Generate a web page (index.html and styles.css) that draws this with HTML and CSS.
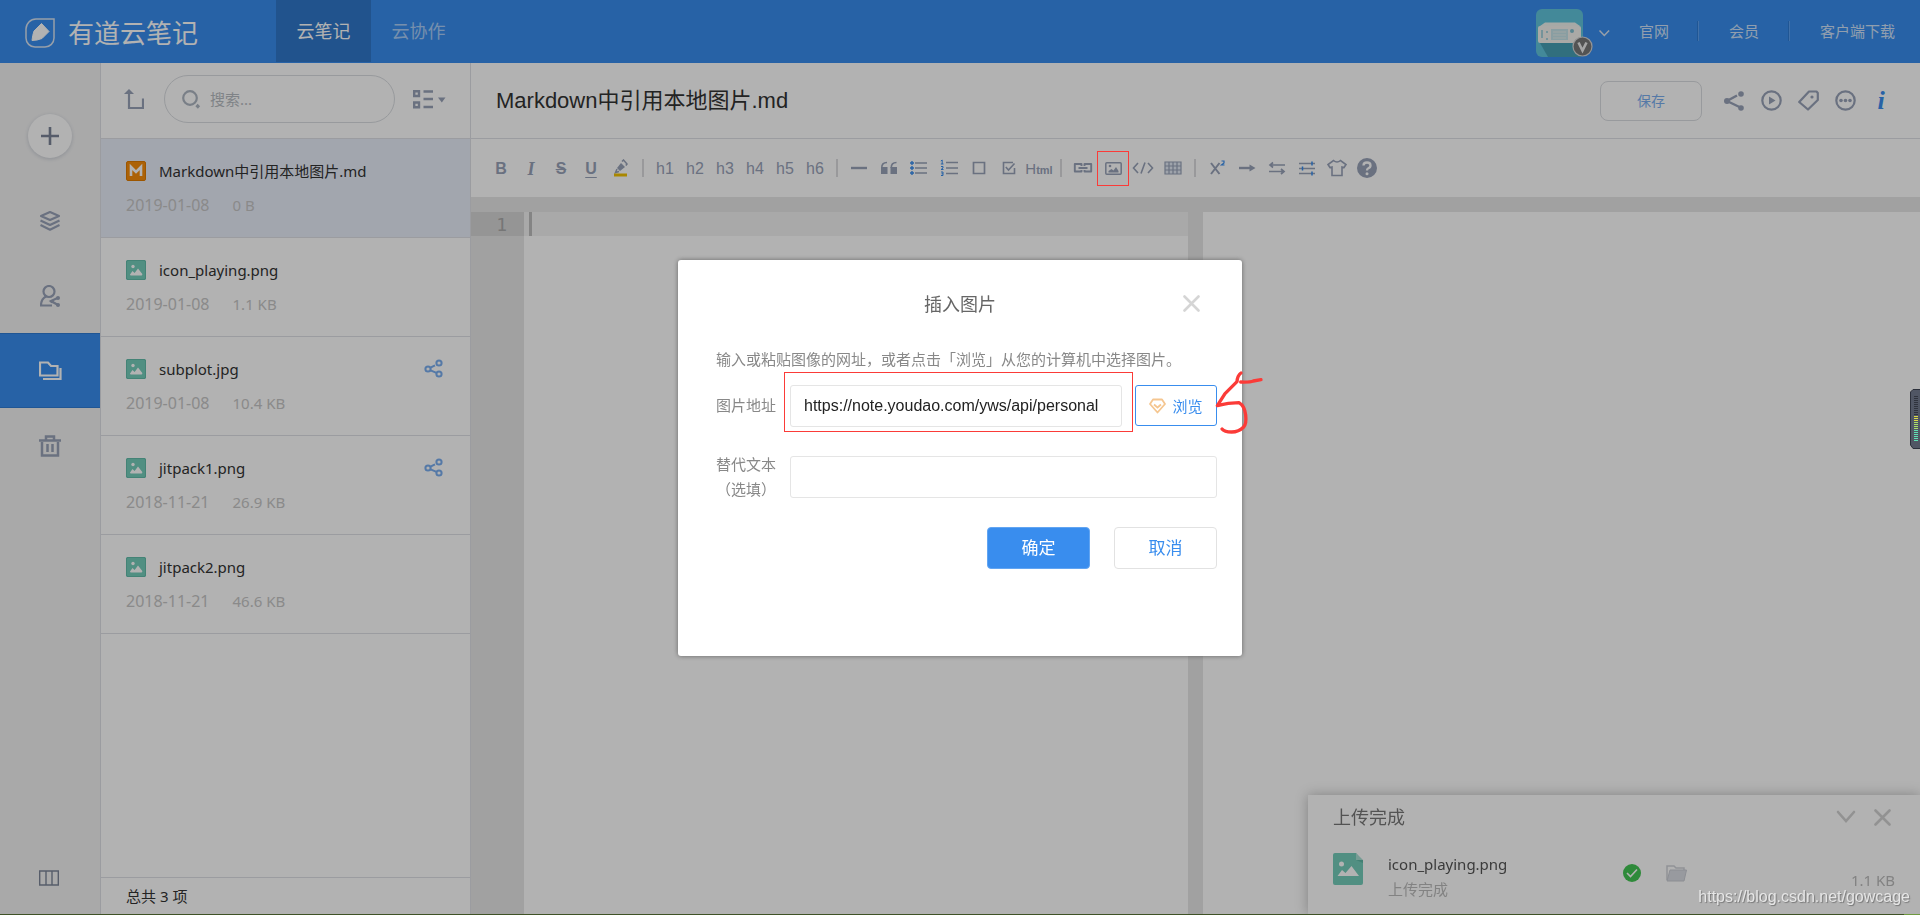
FILE: index.html
```html
<!DOCTYPE html>
<html lang="zh-CN">
<head>
<meta charset="utf-8">
<title>有道云笔记</title>
<link rel="stylesheet" href="styles.css">
</head>
<body>
<svg class="defs" aria-hidden="true">
  <symbol id="pic" viewBox="0 0 20 20">
    <rect width="20" height="20" rx="2" fill="#5fb8a6"/><rect x=".5" y=".5" width="19" height="19" rx="1.5" fill="#74cdbb" stroke="#62bcaa"/>
    <circle cx="7" cy="6.5" r="1.7" fill="#fff"/><path d="M4 14.5 6.5 11 8.6 13 12 8.5l4.300 5.500v.5q0 1-1 1H5q-1 0-1-1z" fill="#fff"/>
  </symbol>
  <symbol id="share" viewBox="0 0 20 20">
    <g fill="none" stroke="#7aaef0" stroke-width="2"><circle cx="4" cy="10" r="2.600"/><circle cx="15" cy="4" r="2.600"/><circle cx="15" cy="15" r="2.600"/><path d="m6.500 8.700 4.500-2.400M6.500 11.300l6 2.600"/></g>
  </symbol>
</svg>

<div class="app">
  <header class="topbar">
    <a class="brand" href="#">
      <svg width="30" height="30" viewBox="0 0 30 30"><path d="M11 1H29V20a9 9 0 0 1-9 9H10a9 9 0 0 1-9-9V11A10 10 0 0 1 11 1Z" fill="none" stroke="#d8e4f2" stroke-width="1.500"/><path d="M16.500 5.500 24 13.500 17 20.500Q12 22.500 7 22.500 7.500 17 9 13Z" fill="#fff" stroke="#fff" stroke-linejoin="round"/></svg>
      <span>有道云笔记</span>
    </a>
    <nav class="tabs"><a class="tab active" href="#">云笔记</a><a class="tab" href="#">云协作</a></nav>
    <div class="account">
      <button class="avatar" aria-label="账户">
        <svg width="76" height="49" viewBox="0 0 76 49">
          <rect width="47" height="48" rx="6" fill="#60c4dc"/><path d="M4 34H45V48H12Z" fill="#47a0b5"/><path d="M9 13.500H39L44 17H4Z" fill="#eef3ee"/><rect x="2" y="17" width="43" height="17" rx="2" fill="#f4f3ee"/>
          <path d="M6 21v8M11 22v2M11 29v2" stroke="#8fc9d8" stroke-width="1.500"/><rect x="15" y="20" width="17" height="11" fill="#c5e2e8"/><path d="M17 23h13M17 26h13M17 29h13" stroke="#e6efec"/><circle cx="36" cy="22" r="2" fill="#80bfd0"/>
          <circle cx="46.500" cy="37.500" r="9.500" fill="#777" stroke="#d5d5d5" stroke-width="1.200"/><path d="m42.500 33.500 4 8 4-8" fill="none" stroke="#ececec" stroke-width="2.600"/>
          <path d="m63.500 21.500 4.800 5 4.800-5" fill="none" stroke="#d8e4f2" stroke-width="1.500"/>
        </svg>
      </button>
      <a class="top-link" href="#">官网</a><a class="top-link" href="#">会员</a><a class="top-link" href="#">客户端下载</a>
    </div>
  </header>

  <div class="workspace">
    <aside class="rail">
      <button class="add" aria-label="新建"><svg width="18" height="18" viewBox="0 0 18 18"><path d="M9 0V18M0 9H18" stroke="#7b8598" stroke-width="2.600"/></svg></button>
      <nav class="rail-nav">
        <a href="#" aria-label="最新"><svg width="20" height="20" viewBox="0 0 20 20"><g fill="none" stroke="#98a2b8" stroke-width="2.200" stroke-linejoin="round"><path d="M1 5 10 1 19 5 10 9Z"/><path d="m.5 9.500 9.500 4.500 9.500-4.500M.5 14l9.500 4.700L19.500 14"/></g></svg></a>
        <a href="#" aria-label="与我分享"><svg width="20" height="22" viewBox="0 0 20 22"><g fill="none" stroke="#98a2b8" stroke-width="2.200"><circle cx="9" cy="6.500" r="5.500"/><path d="M6 11.500Q1 14 1 20.500H12M17.500 13 11 16l7 4"/></g><circle cx="18" cy="13" r="2" fill="#98a2b8"/><circle cx="18" cy="20" r="2" fill="#98a2b8"/><circle cx="12" cy="16.500" r="1.800" fill="#98a2b8"/></svg></a>
        <a class="active" href="#" aria-label="我的文件夹"><svg width="23" height="20" viewBox="0 0 23 20"><path d="M1 1.500H9L12 5H18.500V14.500H1ZM21.500 7V18H4" fill="none" stroke="#fff" stroke-width="2.200"/></svg></a>
        <a href="#" aria-label="回收站"><svg width="22" height="22" viewBox="0 0 22 22"><path d="M0 5.500H22M7 5V1.500H15V5M3 7V20.500H19V7M8.500 9v8M13.500 9v8" fill="none" stroke="#98a2b8" stroke-width="2.500"/></svg></a>
      </nav>
      <button class="layout-toggle" aria-label="切换布局"><svg width="20" height="16" viewBox="0 0 20 16"><path d="M.7 1H19.300V15H.7ZM7 1V15M13 1V15" fill="none" stroke="#7d8699" stroke-width="1.400"/></svg></button>
    </aside>

    <section class="files">
      <div class="files-head">
        <button class="icon-btn" aria-label="上一级"><svg width="20" height="20" viewBox="0 0 20 20"><path d="M5 3V19H19V9.500" fill="none" stroke="#98a2b8" stroke-width="2.200"/><path d="M0 5 5 0 10 5Z" fill="#98a2b8"/></svg></button>
        <label class="search">
          <svg width="19" height="19" viewBox="0 0 19 19"><circle cx="8" cy="8" r="6.800" fill="none" stroke="#aeb6c2" stroke-width="2.200"/><path d="m14.500 15 2.500 2.500" stroke="#aeb6c2" stroke-width="3.200"/></svg>
          <input type="search" placeholder="搜索..." aria-label="搜索">
        </label>
        <button class="icon-btn" aria-label="视图"><svg width="33" height="19" viewBox="0 0 33 19"><path d="M1.200 1.200H6V6H1.200ZM1.200 12.500H6V17.300H1.200ZM10.500 1.500H20M10.500 9H20M10.500 17H20" fill="none" stroke="#98a2b8" stroke-width="2.400"/><path d="M25 7.500h7.500L28.800 12.500Z" fill="#98a2b8"/></svg></button>
      </div>
      <ul class="file-list">
        <li class="file selected">
          <div class="file-name"><svg width="20" height="20" viewBox="0 0 20 20"><rect x=".5" y=".5" width="19" height="19" rx="1.500" fill="#f68d0b" stroke="#e07c00"/><path d="M5 15V6L10 11 15 6V15" fill="none" stroke="#fff" stroke-width="2.600"/></svg><span>Markdown中引用本地图片.md</span></div>
          <div class="file-meta"><time>2019-01-08</time><span>0 B</span></div>
        </li>
        <li class="file">
          <div class="file-name"><svg width="20" height="20"><use href="#pic"/></svg><span>icon_playing.png</span></div>
          <div class="file-meta"><time>2019-01-08</time><span>1.1 KB</span></div>
        </li>
        <li class="file">
          <div class="file-name"><svg width="20" height="20"><use href="#pic"/></svg><span>subplot.jpg</span><svg class="shared" width="20" height="20"><use href="#share"/></svg></div>
          <div class="file-meta"><time>2019-01-08</time><span>10.4 KB</span></div>
        </li>
        <li class="file">
          <div class="file-name"><svg width="20" height="20"><use href="#pic"/></svg><span>jitpack1.png</span><svg class="shared" width="20" height="20"><use href="#share"/></svg></div>
          <div class="file-meta"><time>2018-11-21</time><span>26.9 KB</span></div>
        </li>
        <li class="file">
          <div class="file-name"><svg width="20" height="20"><use href="#pic"/></svg><span>jitpack2.png</span></div>
          <div class="file-meta"><time>2018-11-21</time><span>46.6 KB</span></div>
        </li>
      </ul>
      <footer class="files-foot">总共 3 项</footer>
    </section>

    <main class="note">
      <div class="note-head">
        <h1>Markdown中引用本地图片.md</h1>
        <button class="save">保存</button>
        <div class="note-actions">
          <button aria-label="分享"><svg width="21" height="20" viewBox="0 0 21 20"><g fill="#98a2b8"><circle cx="3" cy="10" r="3"/><circle cx="17" cy="3" r="2.800"/><circle cx="17" cy="17" r="2.800"/></g><path d="M13 4.500 3 10l13.500 6.500" fill="none" stroke="#98a2b8" stroke-width="2.400"/></svg></button>
          <button aria-label="播放"><svg width="21" height="21" viewBox="0 0 21 21"><circle cx="10.500" cy="10.500" r="9.200" fill="none" stroke="#98a2b8" stroke-width="2.200"/><path d="M8 6.500 14.500 10.500 8 14.500Z" fill="#98a2b8"/></svg></button>
          <button aria-label="标签"><svg width="21" height="21" viewBox="0 0 21 21"><path d="M11 1.500H18.500L19.800 3V10L10 19.500 1.200 12Z" fill="none" stroke="#98a2b8" stroke-width="2.200" stroke-linejoin="round"/><circle cx="14" cy="7" r="1.600" fill="#98a2b8"/></svg></button>
          <button aria-label="更多"><svg width="21" height="21" viewBox="0 0 21 21"><circle cx="10.500" cy="10.500" r="9.200" fill="none" stroke="#98a2b8" stroke-width="2.200"/><g fill="#98a2b8"><circle cx="6" cy="10.500" r="1.800"/><circle cx="10.500" cy="10.500" r="1.800"/><circle cx="15" cy="10.500" r="1.800"/></g></svg></button>
          <button class="info" aria-label="信息">i</button>
        </div>
      </div>

      <div class="toolbar">
        <button class="glyph bold">B</button>
        <button class="glyph ital">I</button>
        <button class="glyph strike">S</button>
        <button class="glyph under">U</button>
        <button aria-label="高亮"><svg width="14" height="18" viewBox="0 0 14 18"><path d="M3 9 7 4 11 8 6 12Z" fill="#98a2b8"/><path d="M8 2.500 9.500 1 13 5 11.800 6.500M3 10 1.500 13.500 5 12.500" fill="none" stroke="#98a2b8" stroke-width="1.500"/><path d="M0 16H13" stroke="#f2c200" stroke-width="3"/></svg></button>
        <i class="sep"></i>
        <button class="glyph">h1</button><button class="glyph">h2</button><button class="glyph">h3</button><button class="glyph">h4</button><button class="glyph">h5</button><button class="glyph">h6</button>
        <i class="sep"></i>
        <button aria-label="分隔线"><svg width="18" height="18" viewBox="0 0 18 18"><path d="M1 9H17" stroke="#98a2b8" stroke-width="2.400"/></svg></button>
        <button aria-label="引用"><svg width="18" height="14" viewBox="0 0 18 14"><path d="M1 6H7.500V13H1ZM10.500 6H17V13H10.500Z" fill="#98a2b8"/><path d="M1.800 7Q1.500 1.500 7 1.500M11.300 7Q11 1.500 16.500 1.500" fill="none" stroke="#98a2b8" stroke-width="1.600"/></svg></button>
        <button aria-label="无序列表"><svg width="18" height="16" viewBox="0 0 18 16"><path d="M5 3H17M5 8H17M5 13H17" stroke="#98a2b8" stroke-width="1.400"/><path d="M0 3H4M2 1V5M0 8H4M2 6v4M0 13H4M2 11v4" stroke="#398dee" stroke-width="1.400"/></svg></button>
        <button aria-label="有序列表"><svg width="18" height="18" viewBox="0 0 18 18"><path d="M6 3.500H18M6 9H18M6 14.500H18" stroke="#98a2b8" stroke-width="1.500"/><path d="M.8 2 2.200 1V5M.8 5H3.500M1 7.500H3V9L1 10.500H3.500M1 13H3V16.500H1M1.500 14.800H3" fill="none" stroke="#398dee"/></svg></button>
        <button aria-label="方框"><svg width="14" height="14" viewBox="0 0 14 14"><path d="M1.500 1.500h11v11h-11z" fill="none" stroke="#98a2b8" stroke-width="1.700"/></svg></button>
        <button aria-label="任务"><svg width="14" height="14" viewBox="0 0 14 14"><path d="M12.500 7v5.500h-11v-11H11M3.800 6 6.500 9 12.500 2.500" fill="none" stroke="#98a2b8" stroke-width="1.600"/></svg></button>
        <button class="glyph html"><b>H</b>tml</button>
        <i class="sep"></i>
        <button aria-label="链接"><svg width="20" height="12" viewBox="0 0 20 12"><path d="M8.500 4V2H1.800V9.500H8.500V8M11.500 4V2H18.200V9.500H11.500V8M5.500 6H14.500" fill="none" stroke="#98a2b8" stroke-width="1.900" stroke-linejoin="round"/></svg></button>
        <button class="marked" aria-label="图片"><svg width="17" height="13" viewBox="0 0 17 13"><rect x=".8" y=".8" width="15.400" height="11.400" rx="1" fill="none" stroke="#98a2b8" stroke-width="1.500"/><path d="M3.500 10.500V9L6.500 7 8.500 8.500 11 5 13.500 9V10.500Z" fill="#98a2b8"/><circle cx="5" cy="4" r="1.300" fill="#98a2b8"/></svg></button>
        <button aria-label="代码"><svg width="22" height="14" viewBox="0 0 22 14"><path d="M6 2 1.500 7 6 12M16 2 20.500 7 16 12M13 1.500 9 12.500" fill="none" stroke="#98a2b8" stroke-width="1.600"/></svg></button>
        <button aria-label="表格"><svg width="18" height="14" viewBox="0 0 18 14"><path d="M1 1H17V13H1ZM1 5H17M1 9H17M5 1V13M9 1V13M13 1V13" fill="#e2eaf5" stroke="#98a2b8" stroke-width="1.200"/></svg></button>
        <i class="sep"></i>
        <button aria-label="上标"><svg width="18" height="18" viewBox="0 0 18 18"><path d="m3 4 8.500 11M11.500 4 3 15" stroke="#98a2b8" stroke-width="2"/><path d="M13.500 2H16V4L13.500 6H16.500" fill="none" stroke="#398dee" stroke-width="1.200"/></svg></button>
        <button aria-label="箭头"><svg width="18" height="10" viewBox="0 0 18 10"><path d="M1 5H13" stroke="#98a2b8" stroke-width="2.400"/><path d="M11.500 1.500 17.500 5 11.500 8.500Z" fill="#98a2b8"/></svg></button>
        <button aria-label="同步"><svg width="18" height="14" viewBox="0 0 18 14"><path d="M17 4H2M5 1.500 2 4 5 6.500M1 10.500H16M13 8 16 10.500 13 13" fill="none" stroke="#98a2b8" stroke-width="1.700"/></svg></button>
        <button aria-label="设置"><svg width="18" height="15" viewBox="0 0 18 15"><path d="M1 2.500H17M1 7.500H17M1 12.500H17" stroke="#98a2b8" stroke-width="1.600"/><path d="M14 .5v4M4.500 5.500v4M14 10.500v4" stroke="#398dee" stroke-width="1.500"/></svg></button>
        <button aria-label="主题"><svg width="20" height="18" viewBox="0 0 20 18"><path d="M6.500 1.500Q10 4.500 13.500 1.500L19 5.500 17 8.500 15 8V16.500H5V8L3 8.500 1 5.500Z" fill="none" stroke="#98a2b8" stroke-width="1.600"/></svg></button>
        <button aria-label="帮助"><svg width="20" height="20" viewBox="0 0 20 20"><circle cx="10" cy="10" r="10" fill="#98a2b8"/><path d="M6.500 7.500Q6.500 4.500 10 4.500T13.500 7.500Q13.500 9.500 11 10.500 10 11 10 12.500" fill="none" stroke="#fff" stroke-width="2.300"/><circle cx="10" cy="15.800" r="1.500" fill="#fff"/></svg></button>
      </div>

      <div class="panes">
        <div class="editor">
          <div class="gutter"><span>1</span></div>
          <div class="code"><div class="line"><i class="caret"></i></div><textarea aria-label="Markdown 编辑区"></textarea></div>
        </div>
        <div class="preview"></div>
      </div>
    </main>
  </div>
</div>

<section class="uploads">
  <div class="uploads-head"><h2>上传完成</h2>
    <button aria-label="收起"><svg width="20" height="16" viewBox="0 0 20 16"><path d="M2 3 10 12 18 3" fill="none" stroke="#d2d2d2" stroke-width="2.600" stroke-linecap="round"/></svg></button>
    <button aria-label="关闭"><svg width="17" height="17" viewBox="0 0 17 17"><path d="M1.500 1.500 15.500 15.500M15.500 1.500 1.500 15.500" stroke="#d2d2d2" stroke-width="2.600" stroke-linecap="round"/></svg></button>
  </div>
  <div class="upload">
    <svg class="upload-icon" width="30" height="32" viewBox="0 0 30 32"><path d="M2 0H23L30 9V30Q30 32 28 32H2Q0 32 0 30V2Q0 0 2 0Z" fill="#74cdbb"/><path d="M23 0 30 7H23Z" fill="#a9e0d5"/><path d="M23 7H30V10Z" fill="#5fb8a6"/><circle cx="8.500" cy="11" r="2.500" fill="#fff"/><path d="M4.500 23 9 17 12.500 20 18.500 13 26 23Z" fill="#fff"/></svg>
    <div class="upload-text"><strong>icon_playing.png</strong><span>上传完成</span></div>
    <svg class="upload-done" width="18" height="18" viewBox="0 0 18 18"><circle cx="9" cy="9" r="9" fill="#43c653"/><path d="m4 9 3.500 3.500L14 5.500" fill="none" stroke="#fff" stroke-width="1.600"/></svg>
    <svg class="upload-folder" width="21" height="17" viewBox="0 0 21 17"><path d="M1 15V1H8L10 3H18V6" fill="none" stroke="#cfd2d8" stroke-width="1.500"/><path d="M4 5H20.500L18 16H1Z" fill="#dadde4" stroke="#c9ccd4"/></svg>
    <span class="upload-size">1.1 KB</span>
  </div>
</section>

<div class="mask">
  <form class="dialog" role="dialog" aria-labelledby="dlg-title">
    <div class="dialog-head"><h2 id="dlg-title">插入图片</h2>
      <button type="button" class="close" aria-label="关闭"><svg width="17" height="17" viewBox="0 0 17 17"><path d="M1.500 1.500 15.500 15.500M15.500 1.500 1.500 15.500" stroke="#d5d5d5" stroke-width="2.600" stroke-linecap="round"/></svg></button></div>
    <p>输入或粘贴图像的网址，或者点击「浏览」从您的计算机中选择图片。</p>
    <div class="field first">
      <label for="url">图片地址</label>
      <div class="boxed"><input id="url" type="text" value="https://note.youdao.com/yws/api/personal"></div>
      <button type="button" class="browse"><svg width="17" height="16" viewBox="0 0 17 16"><path d="M4 1.500H13L16 6 8.500 14.500 1 6Z" fill="none" stroke="#f5c690" stroke-width="1.800" stroke-linejoin="round"/><path d="m5 6.500 3.500 3 3.500-3" fill="none" stroke="#f5c690" stroke-width="1.800"/></svg>浏览</button>
    </div>
    <div class="field">
      <label for="alt">替代文本<br>（选填）</label>
      <input id="alt" type="text">
    </div>
    <div class="buttons"><button type="submit" class="ok">确定</button><button type="button" class="cancel">取消</button></div>
    <svg class="step" width="48" height="65" viewBox="735 360 144 195" aria-label="5"><g fill="none" stroke="#fb3b38" stroke-width="10" stroke-linecap="round" stroke-linejoin="round"><path d="M813 369Q802 377 801 395L765 431 742 467Q760 462 775 460L807 458Q824 468 827 495 830 522 821 531 806 546 785 546 763 546 756 537"/><path d="M812 396Q840 397 850 393L873 389"/></g></svg>
  </form>
</div>

<div class="meter"><svg width="10" height="60" viewBox="0 0 10 60"><path d="M10 .5H3L.5 3V56L3 59.500H10" fill="#505664" stroke="#2c303b"/><path d="M6 7V27" stroke="#2f333d" stroke-width="4" stroke-dasharray="1 1"/><path d="M6 27V33" stroke="#dcdc45" stroke-width="4" stroke-dasharray="1 1"/><path d="M6 33V41" stroke="#a8e06a" stroke-width="4" stroke-dasharray="1 1"/><path d="M6 41V53" stroke="#5fe0b4" stroke-width="4" stroke-dasharray="1 1"/></svg></div>
<div class="watermark">https://blog.csdn.net/gowcage</div>
<div class="edge"></div>
</body>
</html>
```

FILE: styles.css
```css
* { box-sizing: border-box; }
body { margin: 0; height: 100vh; overflow: hidden; background: #fff; color: #333; font: 15px/20px "Noto Sans", "Noto Sans CJK SC", sans-serif; }
button { padding: 0; border: 0; background: none; font: inherit; color: inherit; cursor: pointer; }
input, textarea { font: inherit; outline: none; }
h1, h2, p, ul { margin: 0; padding: 0; font-weight: 400; list-style: none; }
a { color: inherit; text-decoration: none; }
svg { display: block; flex: none; }
.defs { position: absolute; width: 0; height: 0; }

.app { display: flex; flex-direction: column; height: 100vh; }
.topbar { display: flex; flex: none; height: 63px; background: #398dee; color: #fff; }
.brand { display: flex; align-items: center; gap: 13px; width: 276px; padding: 2px 0 0 25px; font-size: 26px; line-height: 36px; }
.tabs { display: flex; height: 62px; }
.tab { width: 95px; font-size: 18px; line-height: 62px; text-align: center; color: #a9cdf8; }
.tab.active { background: #3078ca; color: #fff; }
.account { display: flex; align-items: center; margin-left: auto; }
.avatar { width: 76px; margin-top: 4px; }
.top-link { margin-bottom: 2px; padding: 0 30px; line-height: 20px; color: #d0e3fa; }
.top-link + .top-link { border-left: 1px solid #5da3f2; box-shadow: -1px 0 #2f7bd4; }
.top-link:last-child { padding-right: 25px; }
.avatar + .top-link { padding: 0 29px 0 27px; }

.workspace { display: flex; flex: 1; min-height: 0; }
.rail { display: flex; flex: none; flex-direction: column; align-items: center; width: 101px; padding: 51px 0 29px; border-right: 1px solid #dfe0e6; background: #f3f3f3; }
.add { display: grid; place-items: center; width: 44px; height: 44px; border-radius: 50%; background: #fff; box-shadow: 0 1px 4px #c8ccd4; }
.rail-nav { width: 100%; margin-top: 25px; }
.rail-nav a { display: grid; place-items: center; height: 75px; }
.rail-nav .active { background: #398dee; border: solid #2f7bd4; border-width: 1px 0; }
.layout-toggle { margin: auto 2px 0 0; }

.files { display: flex; flex: none; flex-direction: column; width: 370px; border-right: 1px solid #dfe0e6; }
.files-head { display: flex; align-items: center; height: 76px; padding: 0 24px 3px 23px; gap: 18px; border-bottom: 1px solid #dfe0e6; }
.files-head .search { display: flex; align-items: center; flex: 1; gap: 9px; min-width: 0; height: 48px; padding-left: 17px; border: 1px solid #dadde1; border-radius: 24px; margin-left: 2px; }
.search input { flex: 1; min-width: 0; padding: 0; border: 0; background: none; }
.search input::placeholder { color: #b7bcc2; }
.file-list { flex: 1; }
.file { height: 99px; padding: 21px 26px 0 25px; border-bottom: 1px solid #dfe0e6; }
.selected { background: #e9eefa; }
.file-name { display: flex; align-items: center; gap: 13px; height: 22px; }
.shared { margin-left: auto; }
.file-meta { display: flex; gap: 23px; margin-top: 12px; line-height: 22px; color: #c6c6c6; }
.file-meta time { font-size: 16px; }
.files-foot { height: 38px; padding-left: 25px; border-top: 1px solid #dfe0e6; line-height: 37px; }

.note { display: flex; flex: 1; flex-direction: column; min-width: 0; }
.note-head { display: flex; flex: none; align-items: center; height: 76px; padding: 0 22px 0 25px; border-bottom: 1px solid #dfe0e6; }
.note-head h1 { flex: 1; font: 22px/30px "Liberation Sans", "Noto Sans CJK SC", sans-serif; }
.save { width: 102px; height: 40px; border: 1px solid #dadde1; border-radius: 8px; color: #7aaef0; font-size: 14px; }
.note-actions { display: flex; margin-left: 14px; }
.note-actions button { display: grid; place-items: center; width: 37px; height: 40px; }
.note-actions .info { width: 34px; font: italic bold 26px/40px "Liberation Serif", serif; color: #398dee; }

.toolbar { display: flex; flex: none; align-items: center; height: 58px; padding-left: 15px; color: #98a2b8; }
.toolbar button { display: grid; place-items: center; flex: none; width: 30px; height: 35px; }
.toolbar .glyph { padding-top: 1px; font: 16px/20px "Liberation Sans", Arial, sans-serif; }
.toolbar .bold { font-weight: 700; }
.toolbar .ital { font: italic bold 18px/20px "Liberation Serif", serif; }
.toolbar .strike { font-weight: 700; text-decoration: line-through; }
.toolbar .under { font-weight: 700; text-decoration: underline; text-underline-offset: 3px; }
.toolbar .html { display: flex; align-items: baseline; justify-content: center; font-size: 11px; font-weight: 700; line-height: 34px; }
.html b { font-size: 15px; font-weight: 400; }
.sep { flex: none; width: 2px; height: 18px; margin: 0 6px; background: #dcdcdf; }
.marked { position: relative; }
.marked::after { content: ""; position: absolute; z-index: 5; inset: 0 -1px; border: 1px solid #fb3b38; }

.panes { display: grid; grid-template-columns: 1fr 1fr; gap: 15px; flex: 1; padding-top: 15px; background: #e7e7e7; }
.editor { display: flex; background: #fff; }
.gutter { width: 53px; background: #e7e7e7; }
.gutter span { display: block; height: 24px; padding-right: 17px; background: #d6d6d6; color: #aaa; font: 18px/26px "DejaVu Sans Mono", monospace; text-align: right; }
.code { display: flex; flex: 1; flex-direction: column; }
.line { height: 24px; padding-left: 5px; background: #f3f3f3; }
.caret { display: block; width: 3px; height: 24px; background: #bdbdbd; }
.code textarea { flex: 1; border: 0; resize: none; }
.preview { background: #fff; }

.uploads { position: fixed; right: 0; bottom: 1px; width: 612px; height: 119px; padding: 0 25px; background: #fff; box-shadow: 0 0 12px #bbb; }
.uploads-head { display: flex; align-items: center; gap: 18px; height: 44px; padding-right: 4px; }
.uploads-head h2 { flex: 1; font-size: 18px; line-height: 26px; color: #777; }
.upload { display: flex; padding-top: 13px; }
.upload-icon { margin-top: 1px; }
.upload-text { width: 235px; margin-left: 25px; }
.upload-text strong, .upload-text span { display: block; font-weight: 400; line-height: 25px; color: #555; }
.upload-text span { color: #bbb; }
.upload-done { margin-top: 12px; }
.upload-folder { margin: 13px 0 0 25px; }
.upload-size { margin: 18px 0 0 auto; color: #bbb; }

.mask { position: fixed; inset: 0; display: grid; place-items: center; background: rgba(0, 0, 0, .3); }
.dialog { position: relative; width: 564px; min-height: 396px; padding: 28px 25px 40px 38px; border-radius: 3px; background: #fff; box-shadow: 0 0 5px #666; color: #888; }
.dialog-head { display: flex; align-items: center; height: 32px; padding-left: 21px; }
.dialog-head h2 { flex: 1; text-align: center; font-size: 18px; line-height: 28px; color: #666; }
.close { margin-right: 17px; }
.dialog p { margin: 28px 0 2px; line-height: 22px; white-space: nowrap; }
.field { display: flex; align-items: center; margin-top: 20px; }
.field label { flex: none; width: 74px; line-height: 25px; }
.field.first { margin-top: 0; }
.field.first label { width: 68px; }
.field input { flex: 1; min-width: 0; width: 100%; height: 42px; padding: 0 13px; border: 1px solid #e5e5e5; border-radius: 3px; color: #222; font: 16px/22px "Liberation Sans", Arial, sans-serif; }
.boxed { flex: 1; padding: 12px 10px 4px 5px; border: 1px solid #fb3b38; }
.first label, .browse { margin-top: 8px; }
.browse { display: flex; align-items: center; justify-content: center; gap: 6px; width: 82px; height: 41px; margin-left: 2px; border: 1px solid #398dee; border-radius: 3px; color: #398dee; }
.buttons { display: flex; justify-content: flex-end; gap: 24px; margin-top: 25px; }
.buttons button { width: 103px; height: 42px; border: 1px solid #e2e2e2; border-radius: 4px; font-size: 17px; color: #398dee; }
.buttons .ok { border-color: #62a5f2; background: #398dee; color: #fff; }
.step { position: absolute; left: 537px; top: 110px; }

.meter { position: fixed; right: 0; top: 389px; z-index: 6; }
.watermark { position: fixed; right: 10px; bottom: 9px; z-index: 6; font: 16px/18px "Liberation Sans", Arial, sans-serif; color: #e6e6e6; text-shadow: 1px 1px 1px #777; }
.edge { position: fixed; inset: auto 0 0; z-index: 6; height: 1px; background: linear-gradient(90deg, #3f5226 calc(100% - 16px), #6f9a40 0); }
```
